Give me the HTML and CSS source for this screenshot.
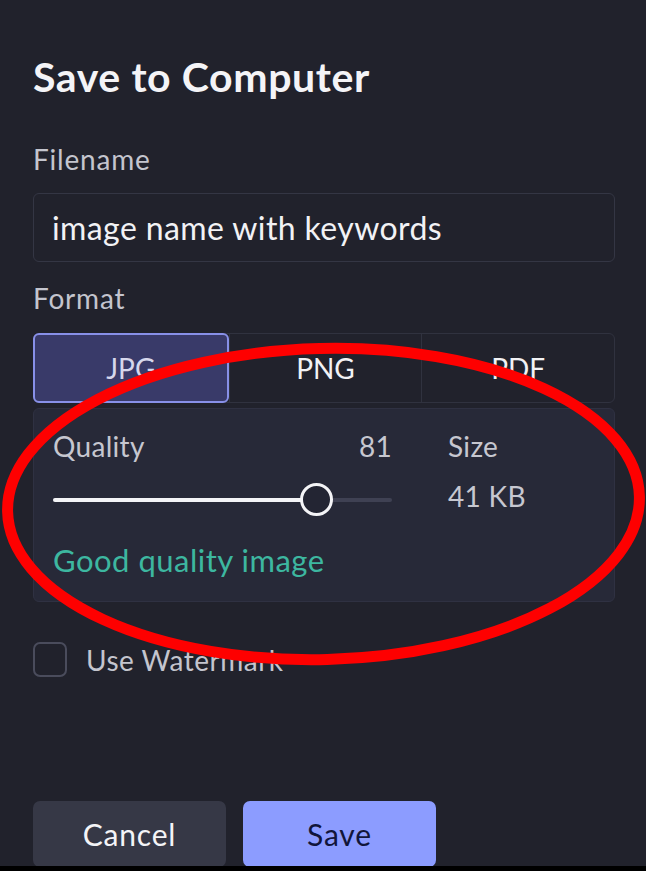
FILE: index.html
```html
<!DOCTYPE html>
<html lang="en">
<head>
    <meta charset="UTF-8">
    <meta name="viewport" content="width=device-width, initial-scale=1.0">
    <title>Save to Computer</title>
    <link rel="stylesheet" href="styles.css">
</head>
<body>
    <div class="dialog">
        <h1 class="title">Save to Computer</h1>

        <label class="label" for="filename">Filename</label>
        <div class="field" id="filename">image name with keywords</div>

        <div class="label label-format">Format</div>
        <div class="formats">
            <div class="format active">JPG</div>
            <div class="format">PNG</div>
            <div class="format">PDF</div>
        </div>

        <div class="panel">
            <div class="panel-row">
                <div class="quality">
                    <div class="quality-head">
                        <span>Quality</span>
                        <span>81</span>
                    </div>
                    <div class="slider">
                        <div class="slider-fill" style="width: 78%"></div>
                        <div class="slider-thumb" style="left: 78%"></div>
                    </div>
                </div>
                <div class="size">
                    <div>Size</div>
                    <div class="size-value">41 KB</div>
                </div>
            </div>
            <div class="hint">Good quality image</div>
        </div>

        <div class="check">
            <span class="check-box"></span>
            <span>Use Watermark</span>
        </div>

        <div class="actions">
            <button class="btn btn-cancel">Cancel</button>
            <button class="btn btn-save">Save</button>
        </div>
    </div>

    <!-- red marker drawn over the screenshot -->
    <svg class="marker" width="646" height="871" viewBox="0 0 646 871">
        <ellipse cx="323.5" cy="504" rx="316" ry="155.5" fill="none" stroke="#fe0000" stroke-width="11" transform="rotate(-1.4 323.5 504)"/>
    </svg>
</body>
</html>
```

FILE: styles.css
```css
html, body {
    margin: 0;
    height: 100%;
}
body {
    font-family: 'Lato', 'Noto Sans', sans-serif;
    background-color: #21222c;
    color: #c6c7d0;
    overflow: hidden;
    position: relative;
    border-bottom: 5px solid #000;
    box-sizing: border-box;
}
.dialog {
    width: 582px;
    margin-left: 33px;
    padding-top: 53px;
}
.title {
    margin: 0;
    font-size: 41px;
    line-height: 48px;
    font-weight: 700;
    letter-spacing: 0.6px;
    color: #f4f4f7;
}
.label {
    display: block;
    margin-top: 41px;
    font-size: 28px;
    line-height: 34px;
    letter-spacing: 0.8px;
    color: #c4c5ce;
}
.label-format {
    margin-top: 19px;
}
.field {
    margin-top: 17px;
    height: 67px;
    border: 1px solid #343644;
    border-radius: 6px;
    padding-left: 18px;
    display: flex;
    align-items: center;
    font-size: 32px;
    letter-spacing: 0.4px;
    color: #f2f2f5;
}
.formats {
    margin-top: 18px;
    display: flex;
    height: 70px;
    border: 1px solid #30323f;
    border-radius: 6px;
    box-sizing: border-box;
}
.format {
    flex: 1;
    display: flex;
    align-items: center;
    justify-content: center;
    font-size: 28px;
    color: #f2f2f5;
    border-left: 1px solid #30323f;
}
.format:first-child {
    border-left: none;
}
.format.active {
    margin: -1px 0 -1px -1px;
    background-color: #393a69;
    border: 2px solid #8890e8;
    border-radius: 6px;
    color: #d6d7ec;
}
.panel {
    margin-top: 5px;
    height: 194px;
    box-sizing: border-box;
    background-color: #272938;
    border: 1px solid #2f3142;
    border-radius: 6px;
    padding: 20px 20px 0 19px;
}
.panel-row {
    display: flex;
    gap: 56px;
    font-size: 28px;
    line-height: 34px;
    letter-spacing: 0.3px;
}
.quality {
    width: 339px;
}
.quality-head {
    display: flex;
    justify-content: space-between;
}
.slider {
    position: relative;
    margin-top: 35px;
    height: 4px;
    background-color: #3f4153;
    border-radius: 2px;
}
.slider-fill {
    height: 4px;
    background-color: #f4f4f7;
    border-radius: 2px;
}
.slider-thumb {
    position: absolute;
    top: -15px;
    width: 27px;
    height: 27px;
    margin-left: -17px;
    border: 3.5px solid #f4f4f7;
    border-radius: 50%;
    background-color: #232533;
}
.size-value {
    margin-top: 16px;
}
.hint {
    margin-top: 30px;
    font-size: 31px;
    line-height: 34px;
    letter-spacing: 0.5px;
    color: #3db7a0;
}
.check {
    margin-top: 40px;
    display: flex;
    align-items: center;
    gap: 19px;
    font-size: 28px;
    letter-spacing: 0.5px;
    color: #c4c5ce;
}
.check-box {
    width: 30px;
    height: 31px;
    border: 2px solid #4a4c5c;
    border-radius: 7px;
}
.actions {
    margin-top: 124px;
    display: flex;
    gap: 17px;
}
.btn {
    width: 193px;
    height: 66px;
    border: none;
    border-radius: 7px;
    font-family: 'Lato', 'Noto Sans', sans-serif;
    font-size: 30px;
    letter-spacing: 0.8px;
    padding: 0;
}
.btn-cancel {
    background-color: #363846;
    color: #f4f4f7;
}
.btn-save {
    background-color: #8c9cff;
    color: #11153a;
}
.marker {
    position: absolute;
    top: 0;
    left: 0;
    pointer-events: none;
}
```
